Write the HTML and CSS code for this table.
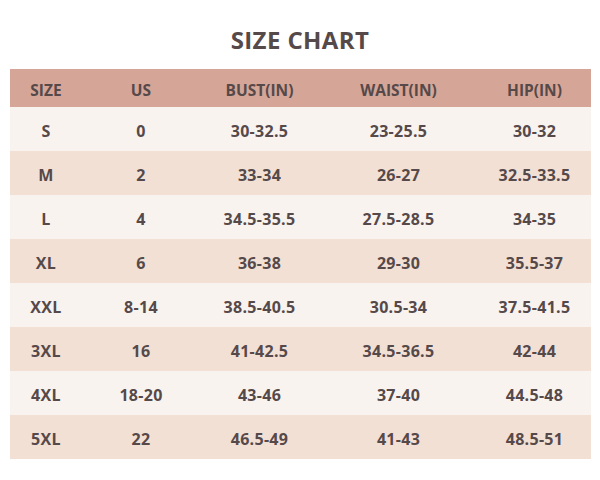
FILE: index.html
```html
<!DOCTYPE html>
<html>
<head>
<meta charset="utf-8">
<link rel="stylesheet" href="styles.css">
</head>
<body>
<div class="page">
  <h1 class="title">SIZE CHART</h1>
  <div class="chart">
    <div class="row head"><span>SIZE</span><span>US</span><span>BUST(IN)</span><span>WAIST(IN)</span><span>HIP(IN)</span></div>
    <div class="row light"><span>S</span><span>0</span><span>30-32.5</span><span>23-25.5</span><span>30-32</span></div>
    <div class="row pink"><span>M</span><span>2</span><span>33-34</span><span>26-27</span><span>32.5-33.5</span></div>
    <div class="row light"><span>L</span><span>4</span><span>34.5-35.5</span><span>27.5-28.5</span><span>34-35</span></div>
    <div class="row pink"><span>XL</span><span>6</span><span>36-38</span><span>29-30</span><span>35.5-37</span></div>
    <div class="row light"><span>XXL</span><span>8-14</span><span>38.5-40.5</span><span>30.5-34</span><span>37.5-41.5</span></div>
    <div class="row pink"><span>3XL</span><span>16</span><span>41-42.5</span><span>34.5-36.5</span><span>42-44</span></div>
    <div class="row light"><span>4XL</span><span>18-20</span><span>43-46</span><span>37-40</span><span>44.5-48</span></div>
    <div class="row pink"><span>5XL</span><span>22</span><span>46.5-49</span><span>41-43</span><span>48.5-51</span></div>
  </div>
</div>
</body>
</html>
```
FILE: styles.css
```css
html, body {
  margin: 0;
  padding: 0;
  background: #ffffff;
}
.page {
  width: 600px;
  height: 480px;
  padding-top: 24px;
  box-sizing: border-box;
  font-family: "Open Sans", "Noto Sans", sans-serif;
  color: #564949;
}
.title {
  margin: 0 0 13px 0;
  font-size: 24px;
  line-height: 32px;
  font-weight: 700;
  text-align: center;
  letter-spacing: 0.4px;
}
.chart {
  margin-left: 10px;
  width: 581px;
  display: flex;
  flex-direction: column;
}
.row {
  display: grid;
  grid-template-columns: 72px 118px 119px 159px 113px;
  height: 44px;
  align-items: center;
  box-sizing: border-box;
  padding-top: 4px;
  font-size: 16px;
  font-weight: 700;
  letter-spacing: 0.3px;
}
.row span {
  text-align: center;
  line-height: 20px;
}
.head {
  height: 38px;
  background: #d5a597;
  font-size: 15.5px;
  letter-spacing: 0;
}
.light {
  background: #f9f3f0;
}
.pink {
  background: #f3e0d5;
}
```
